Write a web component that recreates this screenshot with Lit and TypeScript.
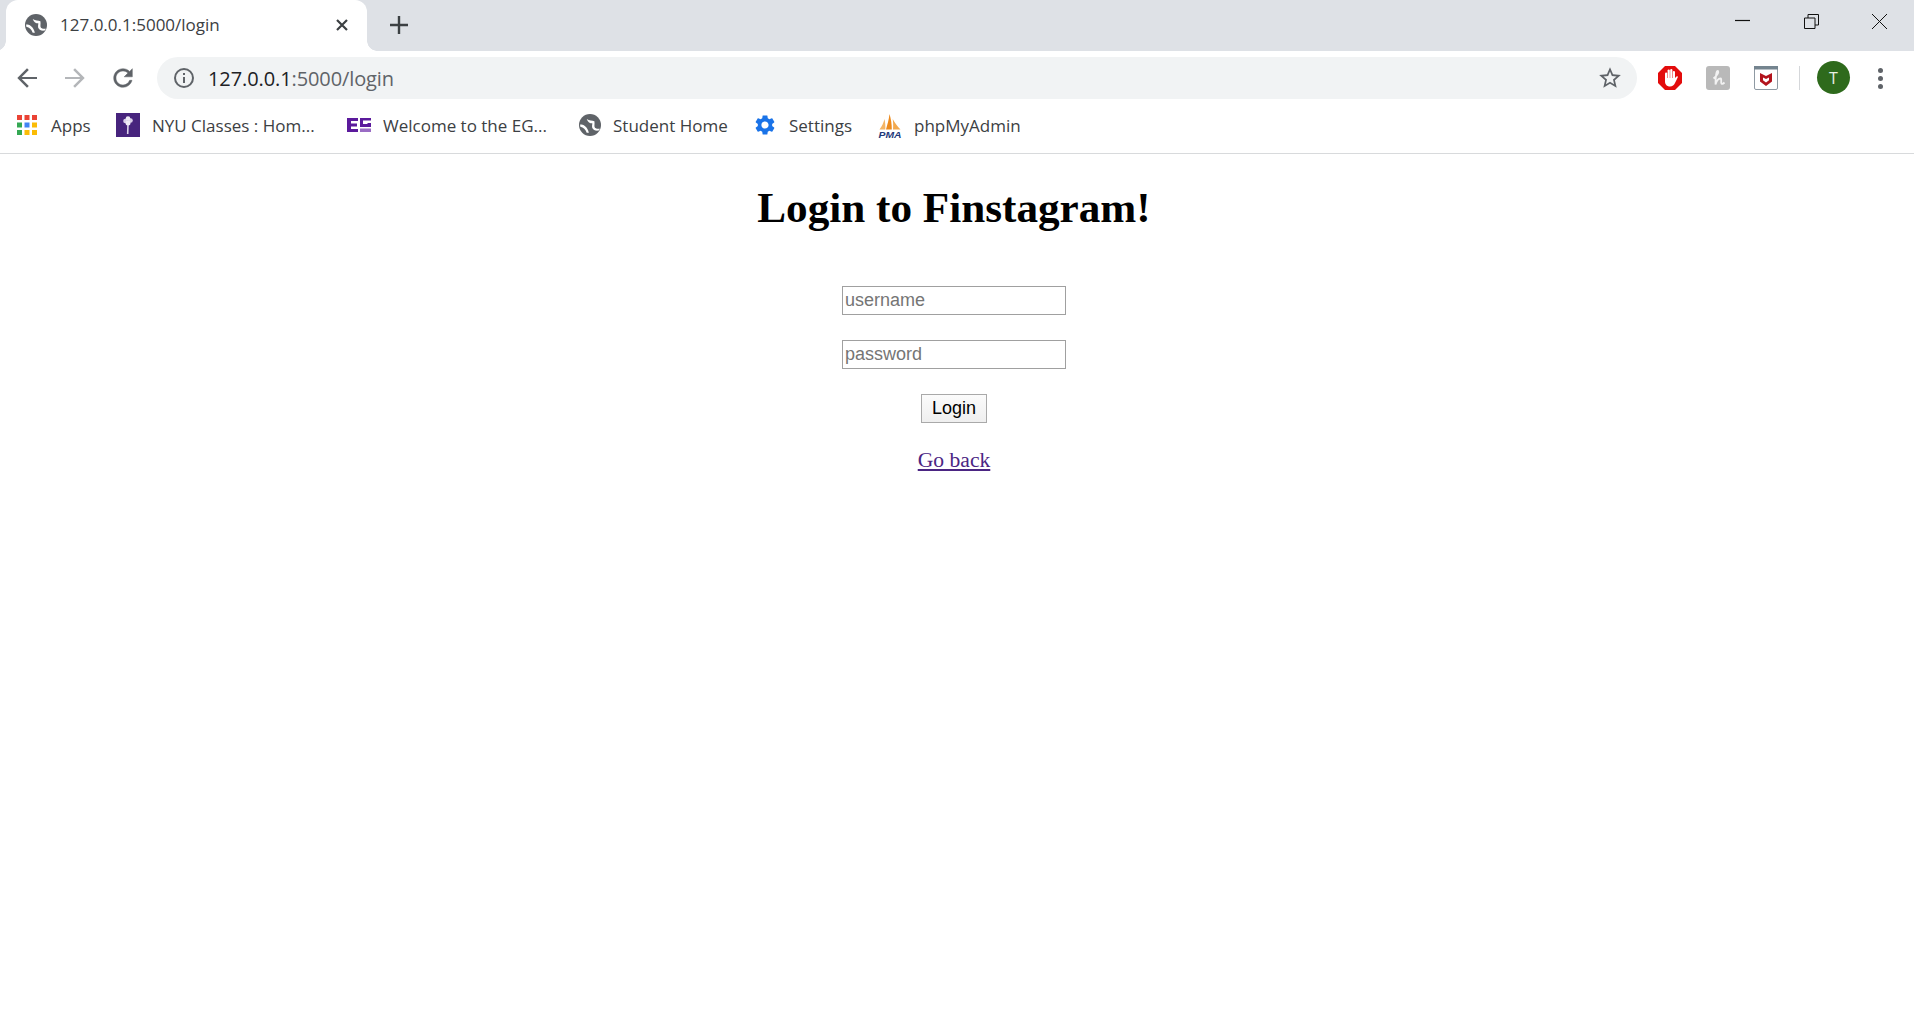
import { LitElement, html, css, svg } from 'lit';
import { customElement } from 'lit/decorators.js';

const GEAR = 'M19.14 12.94c.04-.3.06-.61.06-.94 0-.32-.02-.64-.07-.94l2.03-1.58c.18-.14.23-.41.12-.61l-1.92-3.32c-.12-.22-.37-.29-.59-.22l-2.39.96c-.5-.38-1.03-.7-1.62-.94l-.36-2.54c-.04-.24-.24-.41-.48-.41h-3.84c-.24 0-.43.17-.47.41l-.36 2.54c-.59.24-1.13.57-1.62.94l-2.39-.96c-.22-.08-.47 0-.59.22L2.74 8.87c-.12.21-.08.47.12.61l2.03 1.58c-.05.3-.09.63-.09.94s.02.64.07.94l-2.03 1.58c-.18.14-.23.41-.12.61l1.92 3.32c.12.22.37.29.59.22l2.39-.96c.5.38 1.03.7 1.62.94l.36 2.54c.05.24.24.41.48.41h3.84c.24 0 .44-.17.47-.41l.36-2.54c.59-.24 1.13-.56 1.62-.94l2.39.96c.22.08.47 0 .59-.22l1.92-3.32c.12-.22.07-.47-.12-.61l-2.01-1.58zM12 15.6c-1.98 0-3.6-1.62-3.6-3.6s1.62-3.6 3.6-3.6 3.6 1.62 3.6 3.6-1.62 3.6-3.6 3.6z';

// solid disc with white land patches, as chrome draws its default favicon
const globe = (size: number) => html`<svg width=${size} height=${size} viewBox="2 2 20 20">
  <circle cx="12" cy="12" r="10" fill="#5f6368"></circle>
  <path d="M9 6.500C11.500 8 14 8 16 8.500 16.500 11 15.500 13 16.500 14.500 18 15.500 19.500 15.500 21 15.500L20 17C17 17.500 15 16.500 14 14.500 13.500 12 14.500 11 14 10.500 12 10.500 10 9.500 9 6.500z" fill="#fff"></path>
  <path d="M3 11.500C6 11.500 9.500 13 11 19L9 19C8 16 6 14 3.200 13.500z" fill="#fff"></path>
</svg>`;

const appsColors = ['#ea4335', '#ea4335', '#ea4335', '#34a853', '#4285f4', '#fbbc05', '#34a853', '#fbbc05', '#fbbc05'];

const appsIcon = html`<svg class="apps" width="20" height="20" viewBox="0 0 20 20">
  ${appsColors.map((c, i) => svg`<rect x=${(i % 3) * 7.5} y=${Math.floor(i / 3) * 7.5} width="5" height="5" fill=${c}></rect>`)}
</svg>`;

const nyuIcon = html`<svg width="24" height="24" viewBox="0 0 24 24">
  <rect width="24" height="24" fill="#47247d"></rect>
  <path d="M12 11l-.3 10" stroke="#ddd3ea" stroke-width="1.600" fill="none"></path>
  <circle cx="9.500" cy="8" r="2.300" fill="#d9cfe8"></circle>
  <circle cx="14.500" cy="7.500" r="2.300" fill="#d9cfe8"></circle>
  <circle cx="12" cy="5.500" r="2.300" fill="#efeaf5"></circle>
  <circle cx="12" cy="10" r="2.500" fill="#efeaf5"></circle>
</svg>`;

const egIcon = html`<svg width="24" height="14" viewBox="0 0 24 14">
  <path fill="#5b1a9c" d="M0 0h11v3H4v2.500h6v3H4V11h7v3H0z"></path>
  <path fill="#5b1a9c" d="M13 0h11v2.500h-8V6h4.500V5H24v4H13z"></path>
  <rect x="13" y="10.500" width="11" height="3.500" fill="#9a6cc4"></rect>
</svg>`;

const pmaIcon = html`<svg class="pma-icon" width="24" height="24" viewBox="0 0 24 24">
  <path fill="#f4b566" d="M1.500 15.500C4 12 5.500 9 6.500 5c.8 4 1 7 .8 10.500z"></path>
  <path fill="#ec8a1d" d="M8 15.500C9.500 10 10.800 6 11.500 0c1.500 5 2.300 10 2.300 15.500z"></path>
  <path fill="#f3a94e" d="M15 15.500c.3-4 .2-7-.3-10.500 2.300 4 5 7.500 7.800 10.500z"></path>
  <text x="12" y="23.500" text-anchor="middle" textLength="23" lengthAdjust="spacingAndGlyphs" class="pma">PMA</text>
</svg>`;

const adblockIcon = html`<svg width="24" height="24" viewBox="0 0 24 24">
  <path fill="#e30c0c" d="M7 0h10l7 7v10l-7 7H7l-7-7V7z"></path>
  <g fill="#fff">
    <rect x="7" y="6.500" width="2.200" height="8" rx="1.100"></rect>
    <rect x="9.600" y="3.500" width="2.200" height="10" rx="1.100"></rect>
    <rect x="12.200" y="3" width="2.200" height="10" rx="1.100"></rect>
    <rect x="14.800" y="5" width="2.200" height="9" rx="1.100"></rect>
    <path d="M7 12h10l1.500-1.500c1-.6 1.700.2 1.200 1.100L17 17c-1 2-2.500 3.500-5 3.500-3.200 0-5-2.300-5-5z"></path>
  </g>
</svg>`;

const honeyIcon = html`<svg width="24" height="24" viewBox="0 0 24 24">
  <rect width="24" height="24" rx="3" fill="#b9b9b9"></rect>
  <path d="M7.500 12.500C11 9.500 13 6.500 12 5 10.500 4 9.500 10 9.500 18.500 10.500 15 12.500 12.500 14.500 12.500 16 12.500 14.500 16 15.500 17.500 16.500 18.500 17.500 17.500 18.500 16.500" fill="none" stroke="#f2f2f2" stroke-width="1.800"></path>
</svg>`;

const mcafeeIcon = html`<svg width="24" height="24" viewBox="0 0 24 24">
  <rect x=".5" y=".5" width="23" height="23" rx="1.500" fill="#fff" stroke="#8f9aa3"></rect>
  <rect x="0" y="0" width="24" height="3.500" fill="#74848f"></rect>
  <path fill="#b3141d" d="M6 7l3.500 1.800L12 10l2.500-1.200L18 7v8.500L12 20l-6-4.500zm3 4.500v2.700l3 2.200 3-2.200v-2.700l-3 1.400z"></path>
</svg>`;

@customElement('app-root')
export class AppRoot extends LitElement {
  static styles = css`
    :host {
      display: block;
      min-height: 1020px;
      background: #fff;
      color: #000;
    }

    .chrome {
      font-family: 'Open Sans', 'Noto Sans', sans-serif;
      color: #3c4043;
    }

    .tabstrip {
      display: flex;
      align-items: stretch;
      height: 51px;
      background: #dee1e6;
      padding-left: 6px;
    }

    .tab {
      position: relative;
      display: flex;
      align-items: center;
      width: 361px;
      box-sizing: border-box;
      padding: 0 18px 2px 19px;
      background: #fff;
      border-radius: 12px 12px 0 0;
      font-size: 17px;
    }

    .tab::before,
    .tab::after {
      content: '';
      position: absolute;
      bottom: 0;
      width: 10px;
      height: 10px;
    }

    .tab::before {
      left: -10px;
      background: radial-gradient(circle at 0 0, transparent 9.500px, #fff 10px);
    }

    .tab::after {
      right: -10px;
      background: radial-gradient(circle at 100% 0, transparent 9.500px, #fff 10px);
    }

    .tab-title {
      flex: 1;
      margin-left: 13px;
      white-space: nowrap;
    }

    .tab-close {
      display: block;
    }

    .newtab {
      display: flex;
      align-items: center;
      margin-left: 22px;
      padding-bottom: 2px;
    }

    .window-controls {
      display: flex;
      margin-left: auto;
      padding-right: 27px;
      gap: 53.500px;
      padding-top: 14px;
    }

    .toolbar {
      display: flex;
      align-items: center;
      height: 54px;
      padding-left: 3px;
      box-sizing: border-box;
    }

    .nav {
      display: flex;
      justify-content: center;
      width: 48px;
    }

    .address {
      display: flex;
      align-items: center;
      flex: 1;
      height: 42px;
      margin-left: 10px;
      padding: 0 14px 0 16px;
      border-radius: 21px;
      background: #f1f3f4;
      font-size: 20px;
      letter-spacing: -0.1px;
      color: #5f6368;
    }

    .url {
      flex: 1;
      margin-left: 13px;
    }

    .host {
      color: #202124;
    }

    .actions {
      display: flex;
      align-items: center;
      width: 277px;
      box-sizing: border-box;
      padding-left: 21px;
    }

    .actions .ext {
      display: block;
      width: 24px;
      height: 24px;
      margin-right: 24px;
    }

    .divider {
      width: 1px;
      height: 24px;
      margin-left: -3px;
      background: #d5d7da;
    }

    .avatar {
      display: flex;
      align-items: center;
      justify-content: center;
      width: 33px;
      height: 33px;
      margin-left: 17px;
      margin-bottom: 1px;
      border-radius: 50%;
      background: #2e6a1c;
      color: #e8f0e4;
      font-size: 16px;
    }

    .menu {
      display: flex;
      flex-direction: column;
      gap: 3px;
      margin-left: 28px;
    }

    .menu span {
      width: 5px;
      height: 5px;
      border-radius: 50%;
      background: #5f6368;
    }

    .bookmarks {
      display: flex;
      align-items: center;
      height: 49px;
      padding: 0 0 8px 17px;
      box-sizing: border-box;
      border-bottom: 1px solid #d8dadc;
      font-size: 17px;
    }

    .bookmark {
      display: flex;
      align-items: center;
      gap: 12px;
      white-space: nowrap;
    }

    .bookmark svg {
      display: block;
      flex: none;
    }

    .bookmark .apps {
      margin-right: 2px;
    }

    .bookmark .pma-icon {
      margin-top: 2px;
    }

    .pma {
      font: italic bold 9px 'Liberation Sans', sans-serif;
      fill: #1f3a7a;
    }

    .page {
      display: flex;
      flex-direction: column;
      align-items: center;
      width: 1908px;
      margin-top: -1px;
      font-family: 'Liberation Serif', 'Times New Roman', serif;
    }

    h1 {
      margin: 30px 0 0;
      font-size: 43.200px;
      line-height: 50px;
      font-weight: bold;
    }

    form {
      display: flex;
      flex-direction: column;
      align-items: center;
      margin-top: 53px;
    }

    input,
    button {
      box-sizing: border-box;
      height: 29px;
      font-family: 'Liberation Sans', Arial, sans-serif;
      font-size: 18px;
    }

    input {
      width: 224px;
      margin-bottom: 25px;
      padding: 0 2px;
      border: 1px solid #a0a0a0;
      outline: none;
      background: #fff;
    }

    input::placeholder {
      color: #757575;
      opacity: 1;
    }

    button {
      width: 66px;
      padding: 0;
      border: 1px solid #a9a9a9;
      background: linear-gradient(#fbfbfb, #efefef);
      color: #000;
    }

    a {
      margin-top: 25px;
      font-size: 21.600px;
      line-height: 25px;
      color: #4b2583;
      text-decoration: underline;
    }
  `;

  private bookmark(icon: unknown, label: string, width: number) {
    return html`<div class="bookmark" style="width:${width}px">${icon}<span>${label}</span></div>`;
  }

  render() {
    return html`
      <div class="chrome">
        <div class="tabstrip">
          <div class="tab">
            ${globe(22)}
            <span class="tab-title">127.0.0.1:5000/login</span>
            <svg class="tab-close" width="14" height="14" viewBox="0 0 14 14"><path d="M2 2l10 10M12 2L2 12" stroke="#3c4043" stroke-width="2.200" fill="none"></path></svg>
          </div>
          <div class="newtab">
            <svg width="20" height="20" viewBox="0 0 20 20"><path d="M10 1v18M1 10h18" stroke="#3c4043" stroke-width="2.400" fill="none"></path></svg>
          </div>
          <div class="window-controls">
            <svg width="15" height="15" viewBox="0 0 15 15"><path d="M0 6.500h15" stroke="#111" stroke-width="1.200"></path></svg>
            <svg width="15" height="15" viewBox="0 0 15 15"><path d="M.5 4h10.500v10.500H.5zM4 4V.5h10.500V11H11" stroke="#111" fill="none"></path></svg>
            <svg width="15" height="15" viewBox="0 0 15 15"><path d="M0 0l15 15M15 0L0 15" stroke="#111" fill="none"></path></svg>
          </div>
        </div>

        <div class="toolbar">
          <div class="nav"><svg width="24" height="24" viewBox="0 0 24 24"><path fill="#5f6368" d="M22 11H6.800l7-7L12 2.300 2.300 12 12 21.700l1.800-1.700-7-7H22z"></path></svg></div>
          <div class="nav"><svg width="24" height="24" viewBox="0 0 24 24"><path fill="#b4b6b9" d="M2 11h15.200l-7-7L12 2.300 21.700 12 12 21.700 10.200 20l7-7H2z"></path></svg></div>
          <div class="nav"><svg width="28" height="28" viewBox="0 0 24 24"><path fill="#5f6368" stroke="#5f6368" stroke-width=".4" d="M17.650 6.350C16.200 4.900 14.210 4 12 4c-4.420 0-7.990 3.580-7.990 8s3.570 8 7.990 8c3.730 0 6.840-2.550 7.730-6h-2.080c-.82 2.330-3.040 4-5.650 4-3.310 0-6-2.690-6-6s2.690-6 6-6c1.660 0 3.140.69 4.220 1.780L13 11h7V4l-2.350 2.350z"></path></svg></div>
          <div class="address">
            <svg width="22" height="22" viewBox="0 0 22 22"><circle cx="11" cy="11" r="9" fill="none" stroke="#5f6368" stroke-width="2"></circle><path d="M10 10h2v6h-2zM10 6h2v2h-2z" fill="#5f6368"></path></svg>
            <span class="url"><span class="host">127.0.0.1</span>:5000/login</span>
            <svg width="26" height="26" viewBox="0 0 24 24"><path fill="#5f6368" d="M22 9.240l-7.190-.62L12 2 9.190 8.630 2 9.240l5.460 4.730L5.820 21 12 17.270 18.180 21l-1.630-7.030L22 9.240zM12 15.400l-3.760 2.270 1-4.280-3.320-2.880 4.380-.38L12 6.100l1.710 4.040 4.380.38-3.320 2.880 1 4.280L12 15.400z"></path></svg>
          </div>
          <div class="actions">
            <div class="ext">${adblockIcon}</div>
            <div class="ext">${honeyIcon}</div>
            <div class="ext">${mcafeeIcon}</div>
            <div class="divider"></div>
            <div class="avatar">T</div>
            <div class="menu"><span></span><span></span><span></span></div>
          </div>
        </div>

        <div class="bookmarks">
          ${this.bookmark(appsIcon, 'Apps', 99)}
          ${this.bookmark(nyuIcon, 'NYU Classes : Hom...', 231)}
          ${this.bookmark(egIcon, 'Welcome to the EG...', 232)}
          ${this.bookmark(globe(22), 'Student Home', 174)}
          ${this.bookmark(html`<svg width="24" height="24" viewBox="0 0 24 24"><path fill="#1a73e8" d=${GEAR}></path></svg>`, 'Settings', 125)}
          ${this.bookmark(pmaIcon, 'phpMyAdmin', 150)}
        </div>
      </div>

      <main class="page">
        <h1>Login to Finstagram!</h1>
        <form @submit=${(e: Event) => e.preventDefault()}>
          <input type="text" name="username" placeholder="username" />
          <input type="password" name="password" placeholder="password" />
          <button type="submit">Login</button>
        </form>
        <a href="#">Go back</a>
      </main>
    `;
  }
}
